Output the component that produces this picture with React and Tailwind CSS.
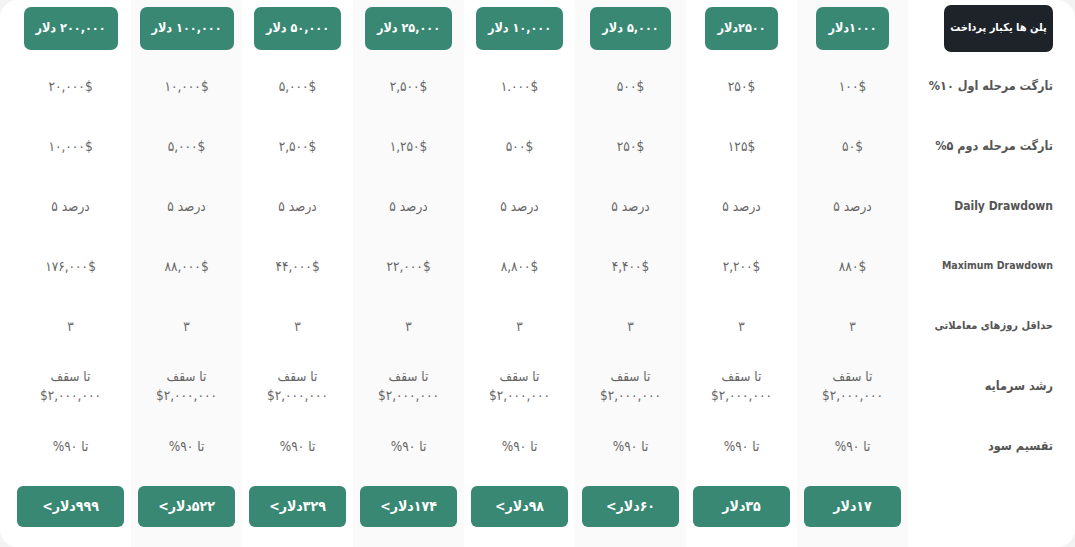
import React from 'react'

// plans, ordered right → left (dir=rtl)
const plans = [
  { title: '۱۰۰۰دلار', t1: '۱۰۰$', t2: '۵۰$', max: '۸۸۰$', price: '۱۷دلار' },
  { title: '۲۵۰۰دلار', t1: '۲۵۰$', t2: '۱۲۵$', max: '۲,۲۰۰$', price: '۳۵دلار' },
  { title: '۵,۰۰۰ دلار', t1: '۵۰۰$', t2: '۲۵۰$', max: '۴,۴۰۰$', price: '۶۰دلار>' },
  { title: '۱۰,۰۰۰ دلار', t1: '۱.۰۰۰$', t2: '۵۰۰$', max: '۸,۸۰۰$', price: '۹۸دلار>' },
  { title: '۲۵,۰۰۰ دلار', t1: '۲,۵۰۰$', t2: '۱,۲۵۰$', max: '۲۲,۰۰۰$', price: '۱۷۴دلار>' },
  { title: '۵۰,۰۰۰ دلار', t1: '۵,۰۰۰$', t2: '۲,۵۰۰$', max: '۴۴,۰۰۰$', price: '۳۲۹دلار>' },
  { title: '۱۰۰,۰۰۰ دلار', t1: '۱۰,۰۰۰$', t2: '۵,۰۰۰$', max: '۸۸,۰۰۰$', price: '۵۲۲دلار>' },
  { title: '۲۰۰,۰۰۰ دلار', t1: '۲۰,۰۰۰$', t2: '۱۰,۰۰۰$', max: '۱۷۶,۰۰۰$', price: '۹۹۹دلار>' },
]

const Cell = ({ children }) => (
  <div className="h-[60px] flex flex-col items-center justify-center text-[13.5px] leading-[19px] text-[#666]">
    {children}
  </div>
)

const Label = ({ children, className = '' }) => (
  <div className={`h-[60px] flex items-center justify-start font-bold text-[#555] whitespace-nowrap ${className}`}>
    {children}
  </div>
)

const PlanColumn = ({ plan, index }) => {
  const last = index === plans.length - 1
  return (
    <div
      className={`flex flex-col ${index % 2 === 0 ? 'bg-[#fafafa]' : 'bg-white'} ${
        last ? 'flex-1 pl-[10px]' : 'w-[111px] shrink-0'
      }`}
    >
      {/* header */}
      <div className="h-[56px] flex items-center justify-center pt-[1px]">
        <div className="h-[43px] px-[12px] flex items-center rounded-[7px] bg-[#388873] text-white font-bold text-[12.5px] whitespace-nowrap">
          {plan.title}
        </div>
      </div>
      <Cell>{plan.t1}</Cell>
      <Cell>{plan.t2}</Cell>
      <Cell>درصد ۵</Cell>
      <Cell>{plan.max}</Cell>
      <Cell>۳</Cell>
      <Cell>
        <span>تا سقف</span>
        <span className="tracking-[0.5px]">$۲,۰۰۰,۰۰۰</span>
      </Cell>
      <Cell>تا ۹۰%</Cell>
      {/* buy */}
      <div className="pt-[10px] px-[7px]">
        <button className="w-full h-[41px] rounded-[6px] bg-[#388873] text-white font-bold text-[14px] flex items-center justify-center">
          {plan.price}
        </button>
      </div>
    </div>
  )
}

export default function App() {
  return (
    <div className="w-[1075px] h-[547px] bg-[#f3f3f3] font-['DejaVu_Sans_Condensed','DejaVu_Sans',sans-serif]">
      <div dir="rtl" className="h-full flex rounded-[18px] bg-white overflow-hidden">
        {/* labels */}
        <div className="w-[167px] shrink-0 flex flex-col pr-[22px] text-[12.5px]">
          <div className="h-[56px] flex items-center justify-start">
            <div className="w-[109px] h-[47px] rounded-[7px] bg-[#1e232a] text-white font-bold text-[11px] flex items-center justify-center whitespace-nowrap">
              پلن ها یکبار پرداخت
            </div>
          </div>
          <Label>تارگت مرحله اول ۱۰%</Label>
          <Label>تارگت مرحله دوم ۵%</Label>
          <Label className="text-[12px]">Daily Drawdown</Label>
          <Label className="text-[10.5px]">Maximum Drawdown</Label>
          <Label className="text-[11px]">حداقل روزهای معاملاتی</Label>
          <Label>رشد سرمایه</Label>
          <Label>تقسیم سود</Label>
        </div>
        {plans.map((p, i) => (
          <PlanColumn key={i} plan={p} index={i} />
        ))}
      </div>
    </div>
  )
}
